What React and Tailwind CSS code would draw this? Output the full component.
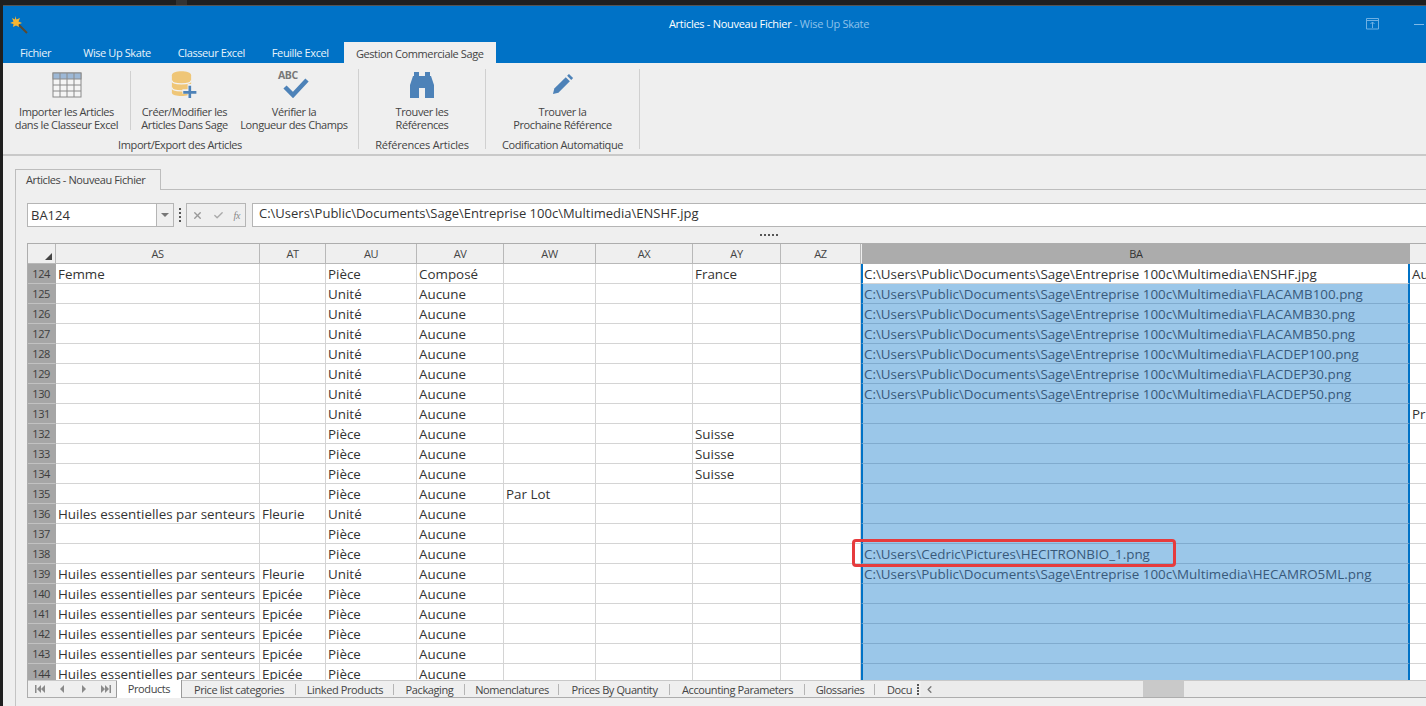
import React from "react";
import { X, Check, ChevronLeft } from "lucide-react";

const base = "C:\\Users\\Public\\Documents\\Sage\\Entreprise 100c\\Multimedia\\";
const ess = "Huiles essentielles par senteurs";

// as, at, au, av, aw, ay, ba, next
const rows = [
  [124, "Femme", "", "Pièce", "Composé", "", "France", base + "ENSHF.jpg", "Au"],
  [125, "", "", "Unité", "Aucune", "", "", base + "FLACAMB100.png", ""],
  [126, "", "", "Unité", "Aucune", "", "", base + "FLACAMB30.png", ""],
  [127, "", "", "Unité", "Aucune", "", "", base + "FLACAMB50.png", ""],
  [128, "", "", "Unité", "Aucune", "", "", base + "FLACDEP100.png", ""],
  [129, "", "", "Unité", "Aucune", "", "", base + "FLACDEP30.png", ""],
  [130, "", "", "Unité", "Aucune", "", "", base + "FLACDEP50.png", ""],
  [131, "", "", "Unité", "Aucune", "", "", "", "Pri"],
  [132, "", "", "Pièce", "Aucune", "", "Suisse", "", ""],
  [133, "", "", "Pièce", "Aucune", "", "Suisse", "", ""],
  [134, "", "", "Pièce", "Aucune", "", "Suisse", "", ""],
  [135, "", "", "Pièce", "Aucune", "Par Lot", "", "", ""],
  [136, ess, "Fleurie", "Unité", "Aucune", "", "", "", ""],
  [137, "", "", "Pièce", "Aucune", "", "", "", ""],
  [138, "", "", "Pièce", "Aucune", "", "", "C:\\Users\\Cedric\\Pictures\\HECITRONBIO_1.png", ""],
  [139, ess, "Fleurie", "Unité", "Aucune", "", "", base + "HECAMRO5ML.png", ""],
  [140, ess, "Epicée", "Pièce", "Aucune", "", "", "", ""],
  [141, ess, "Epicée", "Pièce", "Aucune", "", "", "", ""],
  [142, ess, "Epicée", "Pièce", "Aucune", "", "", "", ""],
  [143, ess, "Epicée", "Pièce", "Aucune", "", "", "", ""],
  [144, ess, "Epicée", "Pièce", "Aucune", "", "", "", ""],
];

const gridCols = "grid grid-cols-[28px_204px_66px_91px_87px_92px_97px_88px_80px_549px_16px]";

const sheetTabs = [
  ["Price list categories", "w-[114px]"],
  ["Linked Products", "w-[98px]"],
  ["Packaging", "w-[71px]"],
  ["Nomenclatures", "w-[94px]"],
  ["Prices By Quantity", "w-[111px]"],
  ["Accounting Parameters", "w-[135px]"],
  ["Glossaries", "w-[70px]"],
];

const Cell = ({ children }) => (
  <div className="h-5 border-r border-b border-[#d4d4d4] pl-[2px] pr-px text-[13.4px] tracking-normal leading-[21px] text-[#333] whitespace-nowrap overflow-hidden">
    {children}
  </div>
);

const Head = ({ children }) => (
  <div className="h-5 border-r border-b border-[#b8b8b8] bg-[#efefef] text-center text-[11px] leading-[20px] text-[#444]">
    {children}
  </div>
);

const RibbonButton = ({ icon, line1, line2, className }) => (
  <div className={`flex flex-col items-center ${className}`}>
    <div className="h-[29px] flex items-end justify-center">{icon}</div>
    <div className="mt-[7px] text-[11px] leading-[13px] text-center text-[#444] whitespace-nowrap">
      <div>{line1}</div>
      <div>{line2}</div>
    </div>
  </div>
);

const TableIcon = () => (
  <svg width="30" height="26" viewBox="0 0 30 26">
    <rect x="1" y="1" width="28" height="24" fill="#f5f5f5" stroke="#8a8a8a" />
    <rect x="1" y="1" width="28" height="6" fill="#9db8d6" stroke="#8a8a8a" />
    <path d="M8 1v24M15 1v24M22 1v24M1 13h28M1 19h28" stroke="#8a8a8a" fill="none" />
  </svg>
);

const DbIcon = () => (
  <svg width="28" height="28" viewBox="0 0 32 32">
    <path d="M1 6c0-6 22-6 22 0v20c0 5-22 5-22 0z" fill="#efc677" />
    <path d="M1 12c0 5 22 5 22 0M1 20c0 5 22 5 22 0" stroke="#f2f2f2" strokeWidth="1.5" fill="none" />
    <path d="M19 16h5v6h6v5h-6v5h-5v-5h-6v-5h6z" fill="#efefef" />
    <path d="M20 18h3v6h6v3h-6v5h-3v-5h-6v-3h6z" fill="#4d82b8" />
  </svg>
);

const AbcIcon = () => (
  <div className="relative w-[32px] h-[28px]">
    <span className="absolute left-0 -top-[2px] text-[10.5px] leading-[14px] font-bold text-[#777]">ABC</span>
    <svg className="absolute left-[5px] top-[7px]" width="26" height="21" viewBox="0 0 26 21">
      <path d="M2 10l8 8L24 3" stroke="#4d82b8" strokeWidth="4.5" fill="none" />
    </svg>
  </div>
);

const BinocularIcon = () => (
  <svg width="24" height="26" viewBox="0 0 24 26">
    <path
      d="M4 0h5v4h6V0h5v4h1l3 9v13h-9V16h-6v10H0V13l3-9h1z"
      fill="#4d82b8"
    />
  </svg>
);

const PencilIcon = () => (
  <svg className="mb-[3px]" width="22" height="22" viewBox="0 0 24 24">
    <path d="M1 23l1.5-6L15 4.5l4.5 4.5L7 21.5z" fill="#4d82b8" />
    <path d="M16.5 3L18.5 1 23 5.5 21 7.5z" fill="#4d82b8" />
  </svg>
);

const NavGlyph = ({ d }) => (
  <svg width="10" height="8" viewBox="0 0 10 8">
    <path d={d} fill="#8a8a8a" />
  </svg>
);

const App = () => (
  <div className="w-[1426px] h-[706px] overflow-hidden bg-[#1f1f1f] flex flex-col tracking-[-0.4px] font-['Open_Sans','Noto_Sans',sans-serif]">
    <div className="h-[5px] shrink-0 flex">
      <div className="ml-[176px] w-[11px] bg-[#333]" />
    </div>
    <div className="flex-1 ml-[3px] flex flex-col bg-[#efefef] min-h-0">
      {/* title bar */}
      <div className="h-[58px] shrink-0 bg-[#0072c6] border-t border-[#555] relative">
        <svg className="absolute left-[6px] top-[9px]" width="20" height="20" viewBox="0 0 20 20">
          <path d="M9 9l9 9" stroke="#5b4a2f" strokeWidth="2" />
          <path d="M6 1l1.5 3.5L11 3 9.5 6.5 13 8 9.5 9.5 10 12 7 10.5 4 12l.5-3L1 8l3.5-1.5L3 3l3 1.5z" fill="#f7b531" />
        </svg>
        <div className="h-[35px] flex items-center justify-center pl-[109px] text-[11px] tracking-[-0.28px] pt-[2px] text-white">
          Articles - Nouveau Fichier<span className="text-[#8fc2ea]">&nbsp;- Wise Up Skate</span>
        </div>
        <svg className="absolute right-[46px] top-[12px]" width="14" height="12" viewBox="0 0 14 12">
          <path d="M.5.5h12v10.5H.5zM.5 2.5h12M6.5 10V4M4.5 6l2-2 2 2" fill="none" stroke="#6fb0e3" />
        </svg>
        <div className="absolute right-[2px] top-[18px] w-[10px] h-px bg-[#7fb9e6]" />
        <div className="flex items-end h-[22px] text-[11px] text-[#e8f2fa] whitespace-nowrap">
          <span className="ml-[17px] pb-[2px]">Fichier</span>
          <span className="ml-[32px] pb-[2px]">Wise Up Skate</span>
          <span className="ml-[27px] pb-[2px]">Classeur Excel</span>
          <span className="ml-[27px] pb-[2px]">Feuille Excel</span>
          <span className="ml-[15px] w-[152px] h-[21px] bg-[#efefef] text-[#444] text-center leading-[24px]">
            Gestion Commerciale Sage
          </span>
        </div>
      </div>

      {/* ribbon */}
      <div className="h-[93px] shrink-0 flex border-b-2 border-[#c9c9c9] text-[#444]">
        <div className="w-[356px] h-[80px] mt-[6px] border-r border-[#d0d0d0] flex flex-col">
          <div className="flex h-[64px]">
            <RibbonButton className="w-[127px]" icon={<TableIcon />} line1="Importer les Articles" line2="dans le Classeur Excel" />
            <div className="w-px h-[59px] mt-[2px] bg-[#d0d0d0]" />
            <RibbonButton className="w-[107px]" icon={<DbIcon />} line1="Créer/Modifier les" line2="Articles Dans Sage" />
            <RibbonButton className="w-[112px]" icon={<AbcIcon />} line1="Vérifier la" line2="Longueur des Champs" />
          </div>
          <div className="text-[11px] leading-[14px] mt-[7px] text-center pr-[1px]">Import/Export des Articles</div>
        </div>
        <div className="w-[127px] h-[80px] mt-[6px] border-r border-[#d0d0d0] flex flex-col">
          <div className="h-[64px]">
            <RibbonButton icon={<BinocularIcon />} line1="Trouver les" line2="Références" />
          </div>
          <div className="text-[11px] tracking-[-0.2px] leading-[14px] mt-[7px] text-center">Références Articles</div>
        </div>
        <div className="w-[154px] h-[80px] mt-[6px] border-r border-[#d0d0d0] flex flex-col">
          <div className="h-[64px]">
            <RibbonButton icon={<PencilIcon />} line1="Trouver la" line2="Prochaine Référence" />
          </div>
          <div className="text-[11px] leading-[14px] mt-[7px] text-center">Codification Automatique</div>
        </div>
      </div>

      {/* document tab */}
      <div className="flex-1 min-h-0 flex flex-col ml-[12px] pt-[13px]">
        <div className="flex h-[21px] shrink-0">
          <div className="w-[146px] border border-b-0 border-[#bdbdbd] bg-[#efefef] text-[11px] leading-[20px] text-[#444] pl-[10px]">
            Articles - Nouveau Fichier
          </div>
          <div className="flex-1 border-b border-[#bdbdbd]" />
        </div>
        <div className="flex-1 min-h-0 border-l border-[#c4c4c4] pl-[11px] pt-[13px] flex flex-col relative">
          {/* formula bar */}
          <div className="flex h-[24px] shrink-0">
            <div className="w-[130px] bg-white border border-[#b5b5b5] text-[13px] tracking-normal leading-[22px] pl-[3px] text-[#333]">BA124</div>
            <div className="w-[17px] border border-l-0 border-[#b5b5b5] flex items-center justify-center">
              <div className="w-0 h-0 border-x-[4px] border-x-transparent border-t-[4px] border-t-[#777]" />
            </div>
            <div className="w-[12px] flex flex-col items-center justify-center gap-[2px]">
              <span className="w-[2px] h-[2px] bg-[#555]" />
              <span className="w-[2px] h-[2px] bg-[#555]" />
              <span className="w-[2px] h-[2px] bg-[#555]" />
              <span className="w-[2px] h-[2px] bg-[#555]" />
            </div>
            <div className="w-[60px] border border-[#b5b5b5] flex items-center justify-between px-[5px]">
              <X size={11} strokeWidth={3} color="#999" />
              <Check size={11} strokeWidth={3} color="#aaa" />
              <span className="text-[10px] italic font-['Liberation_Serif',serif] text-[#888]">fx</span>
            </div>
            <div className="flex-1 ml-[6px] bg-white border border-r-0 border-[#b5b5b5] text-[13px] tracking-normal leading-[19px] pl-[6px] text-[#333] whitespace-nowrap">
              {base}ENSHF.jpg
            </div>
          </div>
          {/* splitter */}
          <div className="h-[16px] shrink-0 flex items-center justify-center pl-[84px] gap-[2px]">
            <span className="w-[2px] h-[2px] bg-[#555]" />
            <span className="w-[2px] h-[2px] bg-[#555]" />
            <span className="w-[2px] h-[2px] bg-[#555]" />
            <span className="w-[2px] h-[2px] bg-[#555]" />
            <span className="w-[2px] h-[2px] bg-[#555]" />
          </div>

          {/* spreadsheet */}
          <div className="flex-1 min-h-0 mb-[8px] border-t border-l border-b border-[#adadad] flex flex-col bg-white">
            <div className="flex-1 min-h-0 overflow-hidden">
              <div className={gridCols}>
                <div className="h-5 border-r border-b border-[#b8b8b8] bg-[#efefef] flex items-end justify-end p-[3px]">
                  <div className="w-0 h-0 border-l-[7px] border-l-transparent border-b-[7px] border-b-[#444]" />
                </div>
                <Head>AS</Head>
                <Head>AT</Head>
                <Head>AU</Head>
                <Head>AV</Head>
                <Head>AW</Head>
                <Head>AX</Head>
                <Head>AY</Head>
                <Head>AZ</Head>
                <div className="h-5 bg-[#acacac] border-l border-l-[#efefef] border-b border-[#acacac] text-center text-[11px] leading-[20px] text-[#333]">BA</div>
                <div className="h-5 border-b border-[#b8b8b8] bg-[#efefef]" />
                {rows.map((r, i) => (
                  <React.Fragment key={r[0]}>
                    <div className="h-5 bg-[#a6a6a6] border-b border-[#c2c2c2] border-r border-r-[#a6a6a6] text-right pr-[5px] text-[11px] leading-[20px] text-[#3d3d3d]">{r[0]}</div>
                    <Cell>{r[1]}</Cell>
                    <Cell>{r[2]}</Cell>
                    <Cell>{r[3]}</Cell>
                    <Cell>{r[4]}</Cell>
                    <Cell>{r[5]}</Cell>
                    <Cell />
                    <Cell>{r[6]}</Cell>
                    <Cell />
                    {i === 0 ? (
                      <div className="h-5 border-l-2 border-r-2 border-[#0072c6] border-b border-b-[#d4d4d4] pl-px text-[13.4px] tracking-normal leading-[21px] text-[#333] whitespace-nowrap overflow-hidden">{r[7]}</div>
                    ) : (
                      <div className="h-5 bg-[#9bc7e9] border-l-2 border-r-2 border-[#0072c6] border-b border-b-[#80abce] pl-px text-[13.4px] tracking-normal leading-[21px] text-[#38597a] whitespace-nowrap overflow-hidden">{r[7]}</div>
                    )}
                    <div className="h-5 border-b border-[#d4d4d4] pl-[2px] text-[13.4px] tracking-normal leading-[21px] text-[#333] whitespace-nowrap overflow-hidden">{r[8]}</div>
                  </React.Fragment>
                ))}
              </div>
            </div>
            {/* sheet tabs */}
            <div className="h-[17px] shrink-0 flex text-[11px] leading-[17px] text-[#444] whitespace-nowrap bg-[#efefef] border-t border-[#c8c8c8]">
              <div className="w-[89px] flex items-center justify-between pl-[7px] pr-[5px] border-r border-[#9a9a9a]">
                <NavGlyph d="M0 0h1.5v8H0zM6 0v8L2 4zM10 0v8L6 4z" />
                <NavGlyph d="M7 0v8L3 4z" />
                <NavGlyph d="M3 0v8l4-4z" />
                <NavGlyph d="M0 0v8l4-4zM4 0v8l4-4zM8.5 0H10v8H8.5z" />
              </div>
              <div className="w-[65px] -mt-px h-[18px] bg-white border-r border-[#9a9a9a] text-center">Products</div>
              {sheetTabs.map(([name, w]) => (
                <div key={name} className={`${w} text-center relative`}>
                  {name}
                  <span className="absolute right-0 top-[3px] h-[11px] w-px bg-[#b5b5b5]" />
                </div>
              ))}
              <div className="w-[40px] pl-[12px] overflow-hidden">Docu</div>
              <div className="w-[6px] flex flex-col items-center justify-center gap-[1px]">
                <span className="w-[2px] h-[2px] bg-[#555]" />
                <span className="w-[2px] h-[2px] bg-[#555]" />
                <span className="w-[2px] h-[2px] bg-[#555]" />
                <span className="w-[2px] h-[2px] bg-[#555]" />
              </div>
              <div className="flex-1 bg-[#ebebeb] flex items-center">
                <ChevronLeft size={11} strokeWidth={3} color="#777" className="ml-[3px]" />
                <div className="ml-[208px] w-[41px] h-full bg-[#c9c9c9]" />
              </div>
            </div>
          </div>

          {/* highlight drawn on top of the sheet */}
          <div className="absolute left-[836px] top-[349px] w-[324px] h-[28px] border-[3px] border-[#e63b3d] rounded-[4px]" />
        </div>
      </div>
    </div>
  </div>
);

export default App;
